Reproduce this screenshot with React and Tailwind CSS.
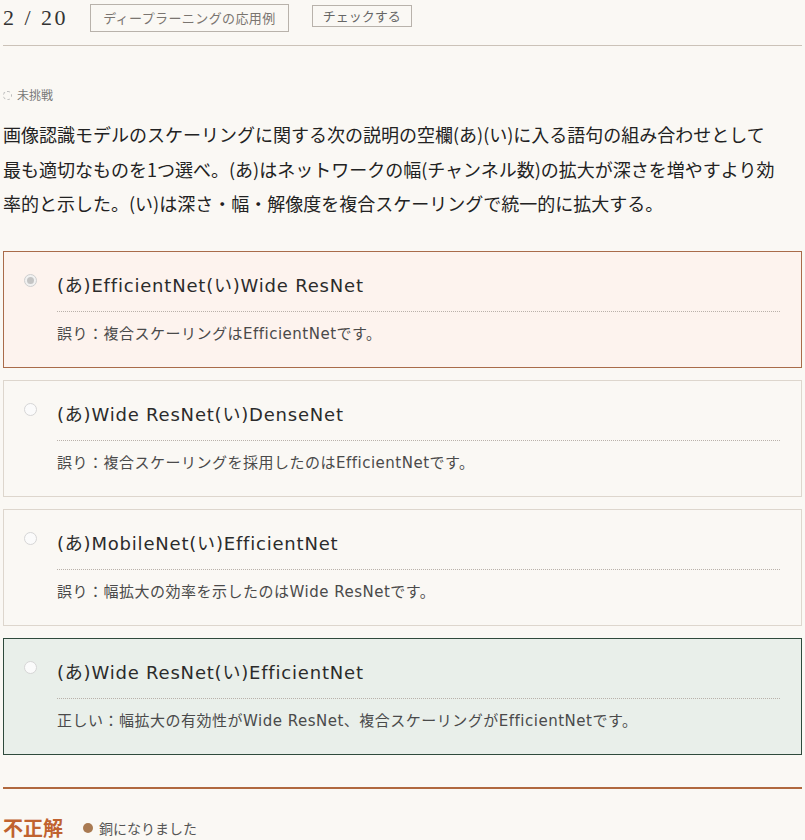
const options = [
  {
    label: '(あ)EfficientNet(い)Wide ResNet',
    note: '誤り：複合スケーリングはEfficientNetです。',
    state: 'wrong',
  },
  {
    label: '(あ)Wide ResNet(い)DenseNet',
    note: '誤り：複合スケーリングを採用したのはEfficientNetです。',
    state: 'none',
  },
  {
    label: '(あ)MobileNet(い)EfficientNet',
    note: '誤り：幅拡大の効率を示したのはWide ResNetです。',
    state: 'none',
  },
  {
    label: '(あ)Wide ResNet(い)EfficientNet',
    note: '正しい：幅拡大の有効性がWide ResNet、複合スケーリングがEfficientNetです。',
    state: 'right',
  },
];

const cardFont = { fontFamily: '"DejaVu Sans", "Noto Sans CJK JP", sans-serif' };

function OptionCard({ option }) {
  const box =
    option.state === 'wrong'
      ? 'border-[#a96b4a] bg-[#fdf3ee]'
      : option.state === 'right'
      ? 'border-[#2f4a3c] bg-[#e9efea]'
      : 'border-[#ddd6cd] bg-[#faf8f4]';

  return (
    <div className={`flex border ${box} pl-[20px] pr-[21px] pt-[20px] pb-[22px]`}>
      <div className="pt-[2px]">
        {option.state === 'wrong' ? (
          <span className="flex h-[13px] w-[13px] items-center justify-center rounded-full border border-[#cfcfcf] bg-[#f1f1f1]">
            <span className="h-[7px] w-[7px] rounded-full bg-[#c4c4c4]" />
          </span>
        ) : (
          <span className="block h-[13px] w-[13px] rounded-full border border-[#d6d6d6] bg-[#fbfbfb]" />
        )}
      </div>
      <div className="ml-[20px] flex-1" style={cardFont}>
        <div className="text-[18px] leading-[28px] tracking-[0.8px] text-[#2b2b2b]">{option.label}</div>
        <div className="mt-[11px] border-t border-dotted border-[#b9b1aa] pt-[11px] text-[15px] leading-[22px] tracking-[0.5px] text-[#4a4a4a]">
          {option.note}
        </div>
      </div>
    </div>
  );
}

export default function App() {
  return (
    <div
      className="min-h-[840px] bg-[#faf8f4] px-[3px] text-[#333]"
      style={{ fontFamily: '"Noto Sans CJK JP", "Noto Sans", sans-serif' }}
    >
      {/* header */}
      <div className="flex items-center pt-[4px] pb-[13px]">
        <span
          className="text-[22px] leading-[28px] tracking-[2.5px] text-[#333]"
          style={{ fontFamily: '"Liberation Serif", "Noto Sans CJK JP", serif' }}
        >
          2 / 20
        </span>
        <span className="ml-[22px] border border-[#b8b2ab] px-[12px] py-[3px] text-[13px] leading-[20px] tracking-[0.4px] text-[#7a7570]">
          ディープラーニングの応用例
        </span>
        <span className="ml-[23px] self-start mt-[1px] border border-[#b8b2ab] px-[10px] py-0 text-[13px] leading-[20px] text-[#666]">
          チェックする
        </span>
      </div>
      <div className="border-t border-[#cbc2b8]" />

      {/* status */}
      <div className="mt-[40px] flex items-center text-[12px] leading-[18px] text-[#777]">
        <span className="mr-[5px] block h-[9px] w-[9px] rounded-full border border-dashed border-[#bbb]" />
        未挑戦
      </div>

      {/* question */}
      <p className="mt-[13px] text-[18px] leading-[34.5px] text-[#222]">
        画像認識モデルのスケーリングに関する次の説明の空欄(あ)(い)に入る語句の組み合わせとして
        <br />
        最も適切なものを1つ選べ。(あ)はネットワークの幅(チャンネル数)の拡大が深さを増やすより効
        <br />
        率的と示した。(い)は深さ・幅・解像度を複合スケーリングで統一的に拡大する。
      </p>

      {/* options */}
      <div className="mt-[30px] flex flex-col gap-[12px]">
        {options.map((o) => (
          <OptionCard key={o.label} option={o} />
        ))}
      </div>

      {/* result */}
      <div className="mt-[32px] border-t-2 border-[#b0683e]" />
      <div className="mt-[26px] flex items-center">
        <span className="text-[20px] font-bold leading-[26px] text-[#c0622f]">不正解</span>
        <span className="ml-[20px] mr-[6px] block h-[10px] w-[10px] rounded-full bg-[#a97a52]" />
        <span className="text-[14px] leading-[20px] text-[#555]">銅になりました</span>
      </div>
    </div>
  );
}
